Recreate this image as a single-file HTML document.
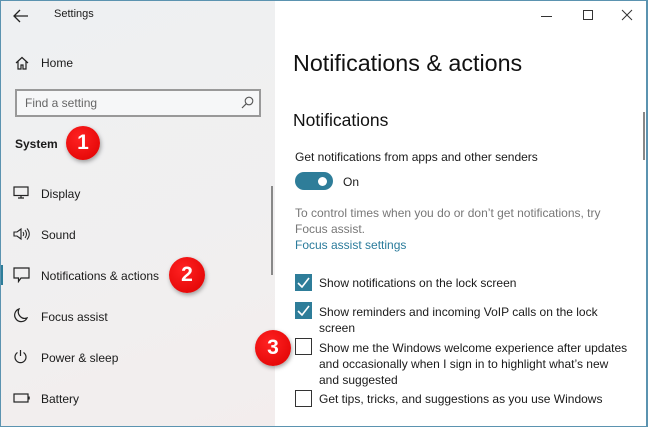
<!DOCTYPE html>
<html><head><style>
*{margin:0;padding:0;box-sizing:border-box}
body{width:648px;height:427px;overflow:hidden;font-family:"Liberation Sans",sans-serif;color:#1a1a1a;position:relative;background:#fff}
.frame{position:absolute;inset:0;border:1px solid #5b93b0;border-right-width:2px;pointer-events:none;z-index:9}
.left{position:absolute;left:0;top:0;width:275px;height:427px;background:linear-gradient(160deg,#eef0f2,#f1efef 70%,#f3eded)}
.t{position:absolute;white-space:nowrap;font-size:12px}
.badge{position:absolute;width:36px;height:36px;border-radius:50%;background:radial-gradient(circle at 40% 35%,#f22,#d00);color:#fff;font-weight:bold;font-size:21px;text-align:center;line-height:36px;box-shadow:1px 2px 4px rgba(0,0,0,.35);z-index:5}
.cb{position:absolute;left:295px;width:17px;height:17px;border:1.5px solid #333;background:#fff}
.cb.on{background:#2e7d99;border-color:#2e7d99}
svg{position:absolute}
</style></head><body>
<div class="left"></div>
<svg style="left:13px;top:9px" width="16" height="14" viewBox="0 0 16 14"><path d="M15 7H2M7 1L1 7l6 6" fill="none" stroke="#222" stroke-width="1.3"/></svg>
<div class="t" style="left:54px;top:8px;font-size:11px">Settings</div>
<svg style="left:15px;top:56px" width="14" height="14" viewBox="0 0 14 14"><path d="M1 7L7 1.5 13 7M3 5.5V13h3V9h2v4h3V5.5" fill="none" stroke="#222" stroke-width="1.2"/></svg>
<div class="t" style="left:41px;top:56px">Home</div>
<div style="position:absolute;left:15px;top:89px;width:246px;height:28px;border:2px solid #999;background:#f6f7f8"></div>
<div class="t" style="left:25px;top:96px;color:#666">Find a setting</div>
<svg style="left:241px;top:96px" width="13" height="13" viewBox="0 0 13 13"><circle cx="8" cy="5" r="3.8" fill="none" stroke="#555" stroke-width="1.1"/><path d="M5.3 7.7L1 12" stroke="#555" stroke-width="1.2"/></svg>
<div class="t" style="left:15px;top:137px;font-weight:bold">System</div>
<div class="badge" style="left:66px;top:126px;width:34px;height:34px;line-height:34px">1</div>
<svg style="left:13px;top:186px" width="16" height="13" viewBox="0 0 16 13"><rect x="1" y="1" width="14" height="8.5" fill="none" stroke="#222" stroke-width="1.2"/><path d="M5 12h6M8 9.5V12" stroke="#222" stroke-width="1.2"/></svg>
<div class="t" style="left:41px;top:187px">Display</div>
<svg style="left:13px;top:227px" width="18" height="14" viewBox="0 0 18 14"><path d="M1 5h3l4-3v10L4 9H1z" fill="none" stroke="#222" stroke-width="1.1"/><path d="M10 5q1.5 2 0 4M12 3q3 4 0 8M14 1.5q4.5 5.5 0 11" fill="none" stroke="#222" stroke-width="1"/></svg>
<div class="t" style="left:41px;top:228px">Sound</div>
<div style="position:absolute;left:0;top:265px;width:3px;height:20px;background:#2e7d99"></div>
<svg style="left:13px;top:267px" width="17" height="16" viewBox="0 0 17 16"><path d="M1 1h15v10H8l-2.5 3.5V11H1z" fill="none" stroke="#222" stroke-width="1.2"/></svg>
<div class="t" style="left:41px;top:269px">Notifications &amp; actions</div>
<div class="badge" style="left:169px;top:257px">2</div>
<svg style="left:14px;top:308px" width="14" height="15" viewBox="0 0 14 15"><path d="M5 1a6.5 6.5 0 1 0 8 9A6.5 6.5 0 0 1 5 1z" fill="none" stroke="#222" stroke-width="1.2"/></svg>
<div class="t" style="left:41px;top:310px">Focus assist</div>
<svg style="left:13px;top:349px" width="15" height="15" viewBox="0 0 15 15"><path d="M4.5 3.5a5.5 5.5 0 1 0 6 0M7.5 1v6" fill="none" stroke="#222" stroke-width="1.2"/></svg>
<div class="t" style="left:41px;top:351px">Power &amp; sleep</div>
<svg style="left:13px;top:393px" width="18" height="10" viewBox="0 0 18 10"><rect x="1" y="1" width="14" height="8" fill="none" stroke="#222" stroke-width="1.2"/><path d="M16 3.5v3" stroke="#222" stroke-width="1.5"/></svg>
<div class="t" style="left:41px;top:392px">Battery</div>
<div style="position:absolute;left:271px;top:186px;width:2px;height:89px;background:#888"></div>

<div style="position:absolute;left:541px;top:16px;width:11px;height:1px;background:#333"></div>
<div style="position:absolute;left:583px;top:10px;width:10px;height:10px;border:1px solid #333"></div>
<svg style="left:621px;top:9px" width="12" height="12" viewBox="0 0 12 12"><path d="M1 1l10 10M11 1L1 11" stroke="#333" stroke-width="1"/></svg>

<div class="t" style="left:293px;top:50px;font-size:23.3px;color:#111">Notifications &amp; actions</div>
<div class="t" style="left:293px;top:110px;font-size:17.5px;color:#111">Notifications</div>
<div class="t" style="left:295px;top:150px">Get notifications from apps and other senders</div>
<div style="position:absolute;left:295px;top:172px;width:38px;height:18px;border-radius:9px;background:#2e7d99"></div>
<div style="position:absolute;left:318px;top:177px;width:9px;height:9px;border-radius:50%;background:#fff"></div>
<div class="t" style="left:343px;top:175px">On</div>
<div class="t" style="left:295px;top:205px;color:#777;line-height:16px">To control times when you do or don’t get notifications, try<br>Focus assist.</div>
<div class="t" style="left:295px;top:238px;color:#2a7b9b">Focus assist settings</div>
<div class="cb on" style="top:274px"></div>
<div class="cb on" style="top:302px"></div>
<div class="cb" style="top:338px"></div>
<div class="cb" style="top:390px"></div>
<svg style="left:297px;top:277px" width="13" height="11"><path d="M1 6l4 4 7-9" fill="none" stroke="#fff" stroke-width="1.6"/></svg>
<svg style="left:297px;top:305px" width="13" height="11"><path d="M1 6l4 4 7-9" fill="none" stroke="#fff" stroke-width="1.6"/></svg>
<div class="t" style="left:319px;top:276px">Show notifications on the lock screen</div>
<div class="t" style="left:319px;top:304px;line-height:16px">Show reminders and incoming VoIP calls on the lock<br>screen</div>
<div class="t" style="left:319px;top:340px;line-height:16px">Show me the Windows welcome experience after updates<br>and occasionally when I sign in to highlight what’s new<br>and suggested</div>
<div class="t" style="left:319px;top:392px">Get tips, tricks, and suggestions as you use Windows</div>
<div class="badge" style="left:255px;top:330px">3</div>
<div style="position:absolute;left:643px;top:112px;width:2px;height:48px;background:#888"></div>
<div class="frame"></div>
</body></html>
